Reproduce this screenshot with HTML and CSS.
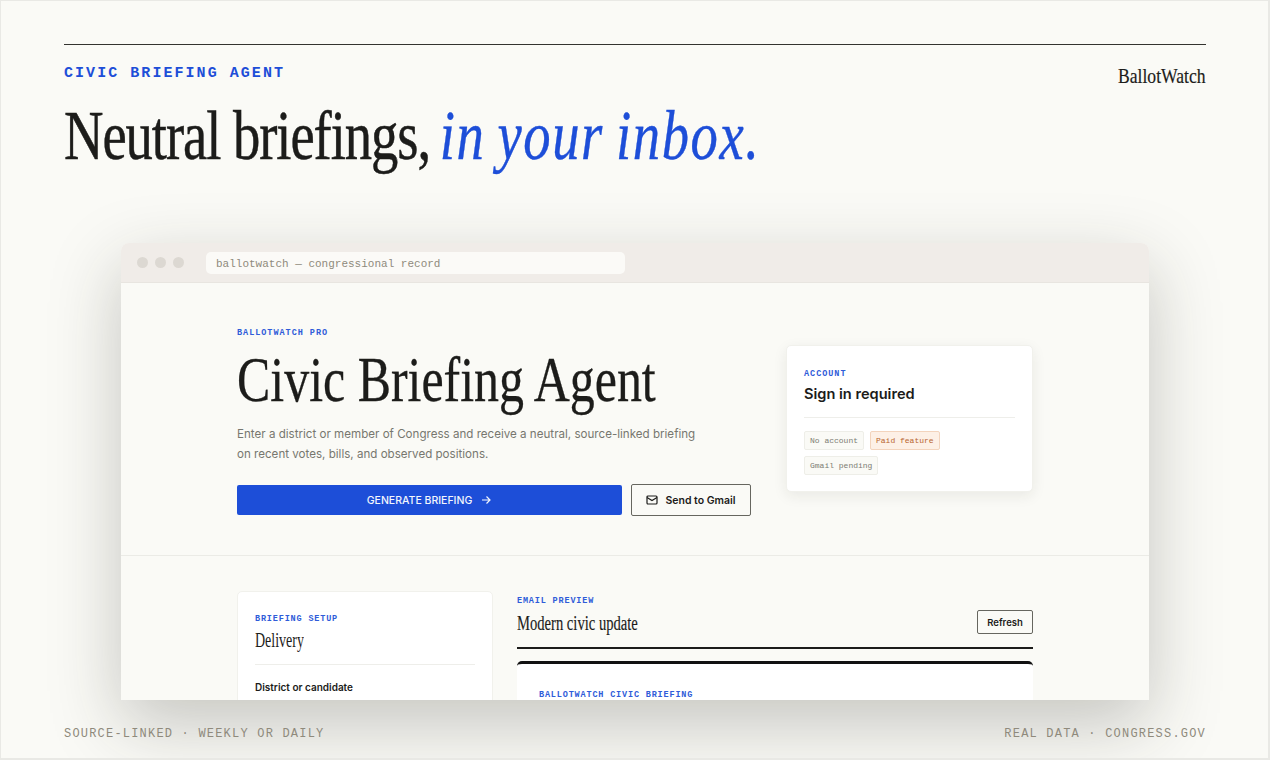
FILE: index.html
```html
<!DOCTYPE html>
<html lang="en">
<head>
  <meta charset="UTF-8" />
  <title>BallotWatch - Civic Briefing Agent</title>
  <link rel="stylesheet" href="styles.css">
</head>
<body>
  <div class="slide">
    <header class="slide-head">
      <div class="slide-top">
        <span class="slide-kicker">CIVIC BRIEFING AGENT</span>
        <span class="brand"><span class="squeeze">BallotWatch</span></span>
      </div>
      <h1 class="slide-title"><span class="squeeze">Neutral briefings, <em>in your inbox.</em></span></h1>
    </header>

    <div class="window">
      <div class="chrome">
        <div class="dots"><i></i><i></i><i></i></div>
        <div class="address">ballotwatch — congressional record</div>
      </div>

      <section class="hero">
        <div class="hero-main">
          <div class="eyebrow eyebrow-wide">BALLOTWATCH PRO</div>
          <h2 class="hero-title"><span class="squeeze">Civic Briefing Agent</span></h2>
          <p class="lede">Enter a district or member of Congress and receive a neutral, source-linked briefing on recent votes, bills, and observed positions.</p>
          <div class="actions">
            <button class="btn-primary">GENERATE BRIEFING
              <svg width="12" height="12" viewBox="0 0 12 12" fill="none" stroke="currentColor" stroke-width="1.2"><path d="M2 6h8M6.500 2.500 10 6l-3.500 3.500"/></svg>
            </button>
            <button class="btn-outline">
              <svg width="12" height="10" viewBox="0 0 12 10" fill="none" stroke="currentColor" stroke-width="1.2"><rect x="1" y="1" width="10" height="8" rx="1"/><path d="M1 2.500 6 5.500l5-3"/></svg>
              Send to Gmail
            </button>
          </div>
        </div>
        <aside class="account">
          <div class="eyebrow eyebrow-wide">ACCOUNT</div>
          <div class="account-title">Sign in required</div>
          <div class="tags">
            <span class="tag">No account</span>
            <span class="tag tag-warn">Paid feature</span>
            <span class="tag">Gmail pending</span>
          </div>
        </aside>
      </section>

      <section class="lower">
        <div class="setup">
          <div class="eyebrow">BRIEFING SETUP</div>
          <div class="setup-title"><span class="squeeze">Delivery</span></div>
          <label class="field-label">District or candidate</label>
        </div>
        <div class="preview">
          <div class="eyebrow">EMAIL PREVIEW</div>
          <div class="preview-head">
            <div class="preview-title"><span class="squeeze">Modern civic update</span></div>
            <button class="btn-small">Refresh</button>
          </div>
          <div class="mail">
            <div class="eyebrow">BALLOTWATCH CIVIC BRIEFING</div>
          </div>
        </div>
      </section>
    </div>

    <footer class="slide-foot">
      <span>SOURCE-LINKED · WEEKLY OR DAILY</span>
      <span>REAL DATA · CONGRESS.GOV</span>
    </footer>
  </div>
</body>
</html>
```

FILE: styles.css
```css
* { margin: 0; padding: 0; box-sizing: border-box; }

body {
  width: 1270px;
  height: 760px;
  overflow: hidden;
  background: #fafaf6;
  font-family: Inter, 'Liberation Sans', sans-serif;
  color: #1c1c1a;
}

.slide {
  height: 760px;
  padding: 43px 62px 0 63px;
  display: flex;
  flex-direction: column;
  border: 1px solid #e9e9e5;
  border-width: 1px 2px 2px 1px;
  overflow: hidden;
}

/* serif display text is squeezed to sit close to the condensed original */
.squeeze {
  display: inline-block;
  white-space: nowrap;
  transform-origin: left center;
  transform: scaleX(0.78);
}

.slide-head {
  height: 199px;
  border-top: 1px solid #33332f;
  flex-shrink: 0;
}

.slide-top {
  display: flex;
  justify-content: space-between;
}

.slide-kicker {
  margin-top: 20px;
  font: bold 15px 'Liberation Mono', monospace;
  letter-spacing: 2.05px;
  color: #1d4ed8;
}

.brand {
  margin-top: 18px;
  width: 88px;
  font: 22px 'Liberation Serif', serif;
  -webkit-text-stroke: 0.2px #1c1c1a;
  color: #1c1c1a;
}

.brand .squeeze { transform: scaleX(0.8); }

.slide-title {
  margin-top: 7px;
  font: normal 70px/80px 'Liberation Serif', serif;
  letter-spacing: -1.35px;
  -webkit-text-stroke: 0.5px #1c1c1a;
  color: #1c1c1a;
}

.slide-title em {
  margin-left: -4px;
  color: #1d4ed8;
  font-style: italic;
  letter-spacing: 2.05px;
  word-spacing: -4px;
  -webkit-text-stroke: 0.4px #1d4ed8;
}

.window {
  flex-shrink: 0;
  height: 457px;
  margin: 0 57px;
  background: #fafaf6;
  border-radius: 8px 8px 0 0;
  overflow: hidden;
  box-shadow: 0 24px 70px rgba(40, 40, 30, 0.25);
  position: relative;
  z-index: 1;
}

.chrome {
  height: 40px;
  background: #f0ece8;
  border-bottom: 1px solid #e8e5e0;
  display: flex;
  align-items: center;
  padding-left: 16px;
}

.dots { display: flex; gap: 7px; width: 69px; }

.dots i {
  width: 11px;
  height: 11px;
  border-radius: 50%;
  background: #dcd8d2;
}

.address {
  width: 419px;
  height: 22px;
  padding-left: 10px;
  background: #fbfaf7;
  border-radius: 5px;
  font: 11px/24px 'Liberation Mono', monospace;
  color: #8f8a7c;
}

.eyebrow {
  font: bold 8.5px 'Liberation Mono', monospace;
  letter-spacing: 0.83px;
  color: #2f5cd9;
  white-space: nowrap;
}

.eyebrow-wide { letter-spacing: 0.97px; }

.hero {
  height: 273px;
  padding: 45px 116px 0;
  border-bottom: 1px solid #ebebe6;
  display: flex;
  gap: 35px;
}

.hero-main { width: 514px; flex-shrink: 0; }

.hero-title {
  margin-top: 6px;
  font: normal 64px/72px 'Liberation Serif', serif;
  -webkit-text-stroke: 0.3px #1c1c1a;
  color: #1c1c1a;
}

.lede {
  margin-top: 8px;
  width: 470px;
  font-size: 11.6px;
  line-height: 20px;
  color: #77776f;
}

.actions { margin-top: 20px; display: flex; align-items: center; gap: 9px; }

.btn-primary {
  width: 385px;
  height: 30px;
  border: none;
  border-radius: 2px;
  background: #1d4ed8;
  color: #f4f6fd;
  font: 500 10.5px Inter, sans-serif;
  display: flex;
  align-items: center;
  justify-content: center;
  gap: 8px;
}

.btn-outline {
  width: 120px;
  height: 32px;
  border: 1px solid #66665f;
  border-radius: 2px;
  background: #fafaf6;
  color: #1c1c1a;
  font: 600 10.5px Inter, sans-serif;
  display: flex;
  align-items: center;
  justify-content: center;
  gap: 7px;
}

.account {
  width: 247px;
  height: 147px;
  margin-top: 17px;
  padding: 23px 17px 0;
  background: #fff;
  border-radius: 5px;
  border: 1px solid #f1f1ec;
  box-shadow: 0 4px 14px rgba(40, 40, 30, 0.08);
}

.account-title {
  margin-top: 5px;
  padding-bottom: 13px;
  border-bottom: 1px solid #eeeeea;
  font-size: 14.6px;
  font-weight: 600;
  line-height: 20px;
}

.tags { margin-top: 13px; display: flex; flex-wrap: wrap; gap: 6px; }

.tag {
  height: 19px;
  padding: 0 5px;
  background: #fafaf6;
  border: 1px solid #eeeee8;
  border-radius: 2px;
  font: 8px/17px 'Liberation Mono', monospace;
  color: #7d7d74;
}

.tag-warn {
  background: #fdf0e6;
  border-color: #f3d4bd;
  color: #b8652f;
}

.lower {
  padding: 35px 116px 0;
  display: flex;
  gap: 24px;
}

.setup {
  width: 256px;
  height: 200px;
  flex-shrink: 0;
  padding: 22px 17px 0;
  background: #fff;
  border: 1px solid #f1f1ec;
  border-radius: 5px;
}

.setup-title {
  margin-top: 3px;
  padding-bottom: 11px;
  border-bottom: 1px solid #eeeeea;
  font: 20px/26px 'Liberation Serif', serif;
}

.setup-title .squeeze { transform: scaleX(0.7); }

.field-label {
  display: block;
  margin-top: 16px;
  font-size: 10px;
  font-weight: 600;
}

.preview { width: 516px; flex-shrink: 0; padding-top: 5px; }

.preview-head {
  height: 43px;
  border-bottom: 2px solid #1c1c1a;
  display: flex;
  justify-content: space-between;
  align-items: flex-start;
}

.preview-title {
  margin-top: 4px;
  font: 20px/26px 'Liberation Serif', serif;
  -webkit-text-stroke: 0.15px #1c1c1a;
}

.preview-title .squeeze { transform: scaleX(0.73); }

.btn-small {
  margin-top: 4px;
  width: 56px;
  height: 24px;
  background: #fafaf6;
  border: 1px solid #66665f;
  border-radius: 2px;
  font: 600 9.5px Inter, sans-serif;
  color: #1c1c1a;
}

.mail {
  margin-top: 12px;
  height: 120px;
  padding: 26px 22px 0;
  background: #fff;
  border-top: 3px solid #111;
  border-radius: 5px 5px 0 0;
}

.slide-foot {
  margin-top: 27px;
  display: flex;
  justify-content: space-between;
  font: 12px 'Liberation Mono', monospace;
  letter-spacing: 1.2px;
  color: #8f8a7c;
  position: relative;
  z-index: 2;
}
```
